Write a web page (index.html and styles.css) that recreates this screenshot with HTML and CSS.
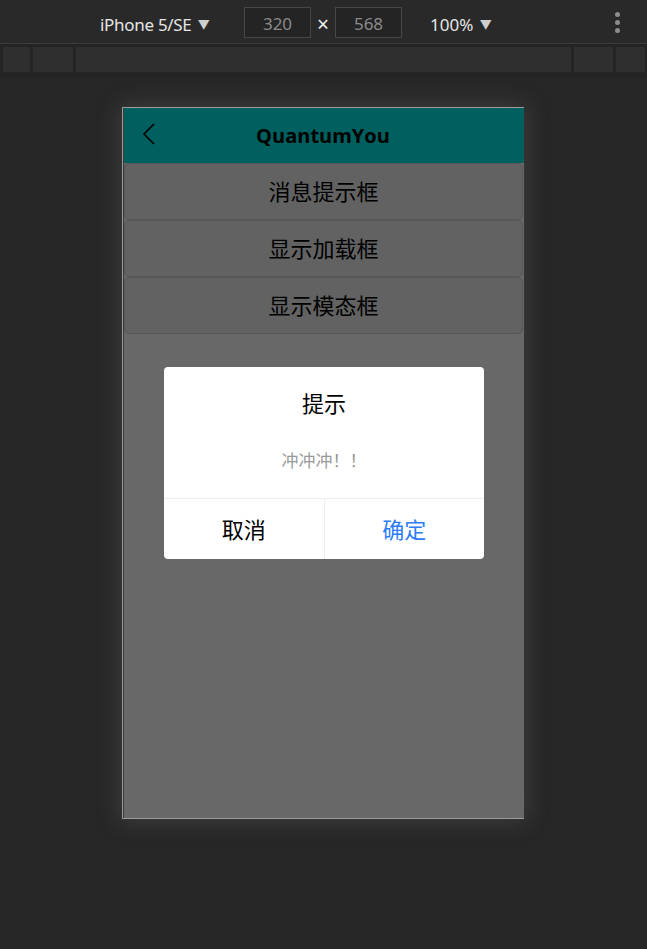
FILE: index.html
```html
<!DOCTYPE html>
<html lang="zh">
<head>
<meta charset="utf-8">
<title>QuantumYou</title>
<link rel="stylesheet" href="styles.css">
</head>
<body>
<div class="toolbar">
  <div class="device">iPhone 5/SE <span class="caret">▼</span></div>
  <div class="dims">
    <div class="dim-box">320</div>
    <span class="times">×</span>
    <div class="dim-box">568</div>
  </div>
  <div class="zoom">100% <span class="caret">▼</span></div>
  <div class="kebab"><i></i><i></i><i></i></div>
</div>
<div class="ruler">
  <div class="rb w1"></div>
  <div class="rb w2"></div>
  <div class="rb grow"></div>
  <div class="rb w3"></div>
  <div class="rb w4"></div>
</div>
<div class="stage">
  <div class="frame">
    <div class="screen">
      <div class="header">
        <svg class="back" width="14" height="22" viewBox="0 0 14 22"><path d="M12 1 L2 11 L12 21" fill="none" stroke="#000" stroke-width="1.6"/></svg>
        <div class="title">QuantumYou</div>
      </div>
      <div class="list">
        <div class="btn">消息提示框</div>
        <div class="btn">显示加载框</div>
        <div class="btn">显示模态框</div>
      </div>
      <div class="modal">
        <div class="modal-title">提示</div>
        <div class="modal-msg">冲冲冲！！</div>
        <div class="modal-actions">
          <div class="act cancel">取消</div>
          <div class="act ok">确定</div>
        </div>
      </div>
    </div>
  </div>
</div>
</body>
</html>
```
FILE: styles.css
```css
* { box-sizing: border-box; }
html, body { margin: 0; padding: 0; }
body {
  background: #272727;
  width: 647px;
  height: 949px;
  overflow: hidden;
  font-family: "Noto Sans", "Noto Sans CJK SC", sans-serif;
}
.toolbar {
  height: 44px;
  background: #292929;
  border-bottom: 1px solid #3d3d3d;
  position: relative;
  display: flex;
  align-items: center;
  color: #e6e6e6;
  font-size: 17px;
  padding-top: 1px;
}
.device, .zoom { position: relative; top: 2px; }
.device { margin-left: 100px; width: 144px; white-space: nowrap; letter-spacing: -0.3px; }
.caret { font-size: 12px; color: #cfcfcf; margin-left: 2px; position: relative; top: -2px; }
.dims { display: flex; align-items: center; }
.dim-box {
  width: 67px;
  height: 31px;
  border: 1px solid #474747;
  background: #242424;
  color: #8a8a8a;
  display: flex;
  align-items: center;
  justify-content: center;
  font-size: 17px;
  padding-top: 2px;
}
.times { width: 24px; text-align: center; font-size: 21px; color: #eee; position: relative; top: 2px; }
.zoom { margin-left: 28px; white-space: nowrap; }
.kebab {
  margin-left: auto;
  margin-right: 27px;
  display: flex;
  flex-direction: column;
  gap: 3px;
}
.kebab i { display: block; width: 5px; height: 5px; border-radius: 50%; background: #8c8c8c; }
.ruler {
  height: 34px;
  background: #242424;
  display: flex;
  gap: 3px;
  padding: 3px 2px 6px 3px;
}
.rb { background: #2f2f2f; height: 25px; }
.w1 { width: 27px; }
.w2 { width: 40px; }
.grow { flex: 1; }
.w3 { width: 39px; }
.w4 { width: 29px; }
.stage {
  display: flex;
  justify-content: flex-start;
  padding-top: 29px;
  padding-left: 122px;
}
.frame {
  width: 402px;
  height: 712px;
  border-top: 1px solid #9b9b9b;
  border-left: 1px solid #9b9b9b;
  border-bottom: 1px solid #9b9b9b;
  box-shadow: 0 0 22px 2px rgba(120, 120, 120, 0.3);
  background: #686868;
  padding-left: 1px;
  background-clip: padding-box;
}
.screen {
  position: relative;
  width: 400px;
  height: 710px;
  background: #686868;
  box-shadow: -1px 0 0 #3a3a3a;
}
.header {
  height: 55px;
  background: #005f5f;
  display: flex;
  align-items: center;
  justify-content: center;
  position: relative;
}
.back { position: absolute; left: 18px; top: 15px; }
.title {
  font-family: "Open Sans", "Noto Sans", sans-serif;
  font-weight: 700;
  font-size: 20px;
  color: #000;
  padding-right: 2px;
}
.list { display: flex; flex-direction: column; }
.btn {
  height: 57px;
  border: 1px solid #575757;
  border-radius: 5px;
  background: #626262;
  display: flex;
  align-items: center;
  justify-content: center;
  font-family: "Noto Sans CJK SC", sans-serif;
  font-size: 22px;
  color: #000;
  margin-right: 1px;
  padding-bottom: 3px;
}
.modal {
  position: absolute;
  left: 40px;
  top: 259px;
  width: 320px;
  height: 192px;
  background: #fff;
  border-radius: 4px;
  display: flex;
  flex-direction: column;
  font-family: "Noto Sans CJK SC", sans-serif;
}
.modal-title {
  text-align: center;
  font-size: 22px;
  color: #000;
  margin-top: 20px;
  line-height: 30px;
}
.modal-msg {
  text-align: center;
  font-size: 17px;
  color: #999;
  margin-top: 31px;
  line-height: 24px;
}
.modal-actions {
  margin-top: auto;
  height: 61px;
  border-top: 1px solid #eeeeee;
  display: flex;
}
.act {
  flex: 1;
  display: flex;
  align-items: center;
  justify-content: center;
  font-size: 22px;
  padding-bottom: 2px;
}
.cancel { color: #000; border-right: 1px solid #eeeeee; }
.ok { color: #2d7cf6; }
```
